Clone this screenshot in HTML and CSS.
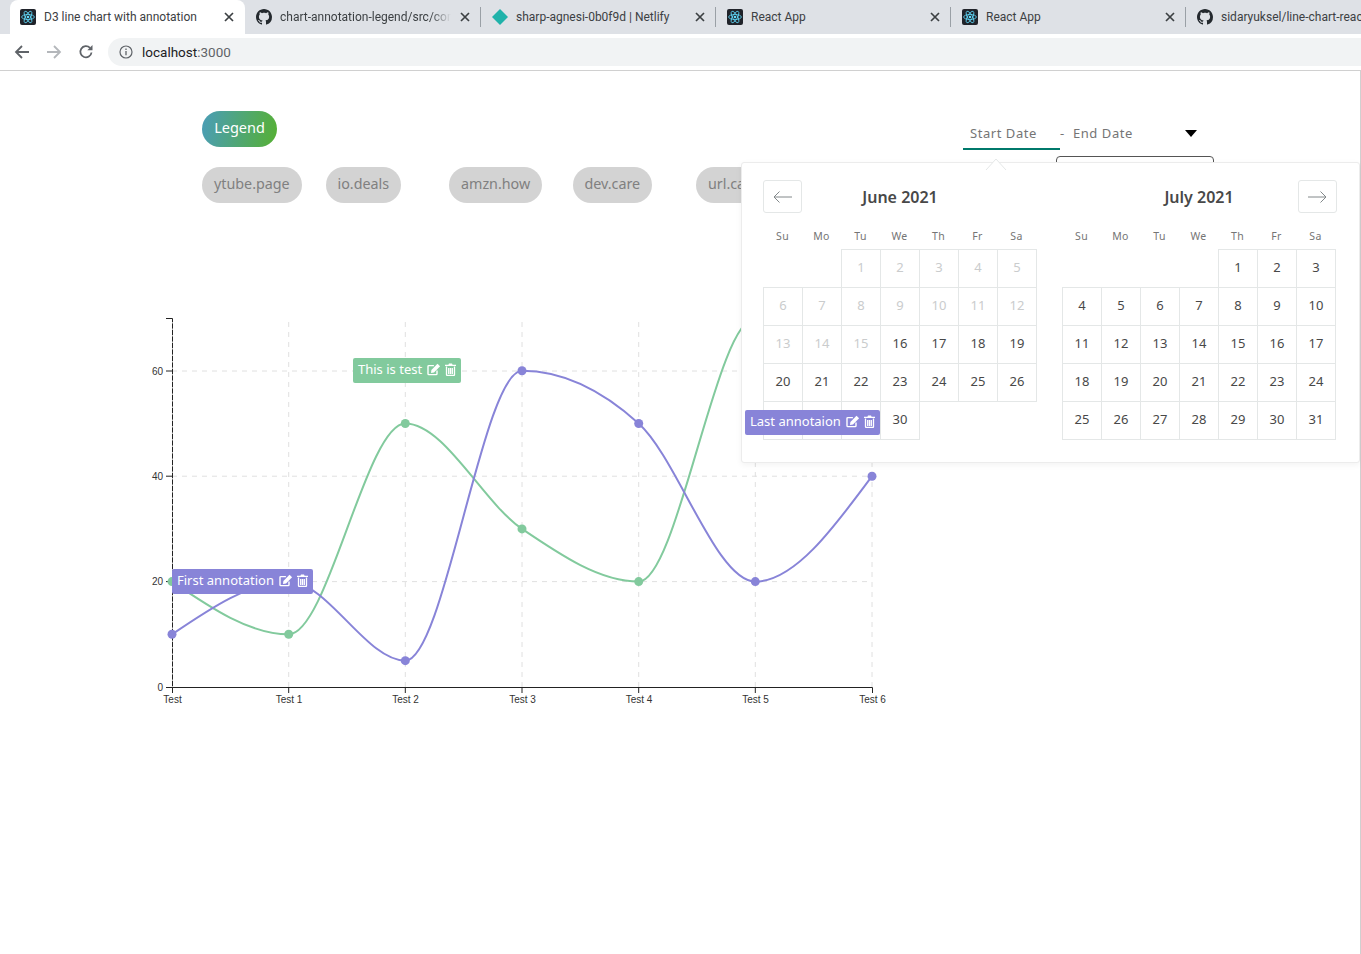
FILE: index.html
```html
<!DOCTYPE html>
<html lang="en">
<head>
    <meta charset="UTF-8">
    <meta name="viewport" content="width=device-width, initial-scale=1.0">
    <title>D3 line chart with annotation</title>
    <link rel="stylesheet" href="styles.css">
</head>
<body>
    <!-- shared icons -->
    <svg class="defs" width="0" height="0">
        <symbol id="react" viewBox="0 0 16 16">
            <rect width="16" height="16" rx="2" fill="#20232a"/>
            <g fill="none" stroke="#61dafb" stroke-width="0.8">
                <ellipse cx="8" cy="8" rx="6.4" ry="2.5"/>
                <ellipse cx="8" cy="8" rx="6.4" ry="2.5" transform="rotate(60 8 8)"/>
                <ellipse cx="8" cy="8" rx="6.4" ry="2.5" transform="rotate(120 8 8)"/>
            </g>
            <circle cx="8" cy="8" r="1.3" fill="#61dafb"/>
        </symbol>
        <symbol id="github" viewBox="0 0 16 16">
            <path fill="#24292e" d="M8 0C3.58 0 0 3.58 0 8c0 3.54 2.29 6.53 5.47 7.59.4.07.55-.17.55-.38 0-.19-.01-.82-.01-1.49-2.01.37-2.53-.49-2.69-.94-.09-.23-.48-.94-.82-1.13-.28-.15-.68-.52-.01-.53.63-.01 1.08.58 1.23.82.72 1.21 1.87.87 2.33.66.07-.52.28-.87.51-1.07-1.78-.2-3.64-.89-3.64-3.95 0-.87.31-1.59.82-2.15-.08-.2-.36-1.02.08-2.12 0 0 .67-.21 2.2.82.64-.18 1.32-.27 2-.27.68 0 1.36.09 2 .27 1.53-1.04 2.2-.82 2.2-.82.44 1.1.16 1.92.08 2.12.51.56.82 1.27.82 2.15 0 3.07-1.87 3.75-3.65 3.95.29.25.54.73.54 1.48 0 1.07-.01 1.93-.01 2.2 0 .21.15.46.55.38A8.013 8.013 0 0016 8c0-4.42-3.58-8-8-8z"/>
        </symbol>
        <symbol id="netlify" viewBox="0 0 16 16">
            <path fill="#20b2aa" d="M8 0l8 8-8 8-8-8z"/>
        </symbol>
        <symbol id="close" viewBox="0 0 10 10">
            <path d="M1 1l8 8M9 1l-8 8" fill="none" stroke="#3c4043" stroke-width="1.7"/>
        </symbol>
        <symbol id="edit" viewBox="0 0 14 13">
            <path d="M10 7.6v3.1a.9.9 0 0 1-.9.9H1.9a.9.9 0 0 1-.9-.9V3.5a.9.9 0 0 1 .9-.9h5" fill="none" stroke="#fff" stroke-width="1.4"/>
            <path d="M4.4 7l6.1-6.2 2.6 2.5-6.1 6.1-3 .5z" fill="#fff"/>
        </symbol>
        <symbol id="trash" viewBox="0 0 11 13">
            <path d="M0 1.8h3.4L4 .6h3l.6 1.2H11v1.3H0z" fill="#fff"/>
            <path d="M1.5 3.6v8a.9.9 0 0 0 .9.9h6.2a.9.9 0 0 0 .9-.9v-8M3.7 5v6M5.5 5v6M7.3 5v6" fill="none" stroke="#fff" stroke-width="1.3"/>
        </symbol>
    </svg>

    <div class="tabs">
        <div class="tab active">
            <svg class="favicon"><use href="#react"/></svg>
            <span class="tab-title">D3 line chart with annotation</span>
            <svg class="tab-close"><use href="#close"/></svg>
        </div>
        <div class="tab">
            <svg class="favicon"><use href="#github"/></svg>
            <span class="tab-title fade">chart-annotation-legend/src/components/Chart.js</span>
            <svg class="tab-close"><use href="#close"/></svg>
        </div>
        <div class="tab">
            <svg class="favicon"><use href="#netlify"/></svg>
            <span class="tab-title">sharp-agnesi-0b0f9d | Netlify</span>
            <svg class="tab-close"><use href="#close"/></svg>
        </div>
        <div class="tab">
            <svg class="favicon"><use href="#react"/></svg>
            <span class="tab-title">React App</span>
            <svg class="tab-close"><use href="#close"/></svg>
        </div>
        <div class="tab">
            <svg class="favicon"><use href="#react"/></svg>
            <span class="tab-title">React App</span>
            <svg class="tab-close"><use href="#close"/></svg>
        </div>
        <div class="tab">
            <svg class="favicon"><use href="#github"/></svg>
            <span class="tab-title">sidaryuksel/line-chart-react</span>
            <svg class="tab-close"><use href="#close"/></svg>
        </div>
    </div>

    <div class="toolbar">
        <svg class="nav-icon" viewBox="0 0 16 16"><path d="M15 8H2M8 2L2 8l6 6" fill="none" stroke="#5f6368" stroke-width="1.8"/></svg>
        <svg class="nav-icon" viewBox="0 0 16 16"><path d="M1 8h13M8 2l6 6-6 6" fill="none" stroke="#b4b7bb" stroke-width="1.8"/></svg>
        <svg class="nav-icon" viewBox="0 0 16 16"><path d="M13.5 8.5A5.6 5.6 0 1 1 12 3.9" fill="none" stroke="#5f6368" stroke-width="1.8"/><path d="M14.5 1v5.2H9.3z" fill="#5f6368"/></svg>
        <div class="url-bar">
            <svg class="info-icon" viewBox="0 0 14 14">
                <circle cx="7" cy="7" r="6" fill="none" stroke="#5f6368" stroke-width="1.2"/>
                <path d="M7 6v4.2M7 3.6v1.3" stroke="#5f6368" stroke-width="1.3"/>
            </svg>
            <span class="url">localhost<span class="url-port">:3000</span></span>
        </div>
    </div>

    <main class="page">
        <div class="top-row">
            <div class="legend-title">Legend</div>
            <div class="date-range">
                <span class="date-input start">Start Date</span>
                <span class="date-dash">-</span>
                <span class="date-input end">End Date</span>
                <span class="caret"></span>
            </div>
            <div class="select-box"></div>
        </div>

        <div class="chips">
            <div class="chip">ytube.page</div>
            <div class="chip">io.deals</div>
            <div class="chip">amzn.how</div>
            <div class="chip">dev.care</div>
            <div class="chip">url.care</div>
        </div>

        <div class="chart-wrap">
            <svg class="chart" width="770" height="400" viewBox="130 310 770 400">
                <g class="grid">
                    <path d="M172 371H872M172 476.2H872M172 581.6H872"/>
                    <path d="M288.7 322V687M405.3 322V687M522 322V687M638.7 322V687M755.3 322V687M872 322V687"/>
                </g>
                <g class="axis">
                    <path d="M166 318.5H172.5V687.5H872.5V693M172.5 687.5V693M288.7 687.5V693M405.3 687.5V693M522 687.5V693M638.7 687.5V693M755.3 687.5V693M166 687.5H172.5M166 371H172.5M166 476.2H172.5M166 581.6H172.5"/>
                </g>
                <path class="axis-dash" d="M172.5 322V687"/>
                <g class="tick-labels">
                    <text x="163" y="374.5" text-anchor="end">60</text>
                    <text x="163" y="480" text-anchor="end">40</text>
                    <text x="163" y="585" text-anchor="end">20</text>
                    <text x="163" y="691" text-anchor="end">0</text>
                    <text x="172.5" y="703" text-anchor="middle">Test</text>
                    <text x="289" y="703" text-anchor="middle">Test 1</text>
                    <text x="405.5" y="703" text-anchor="middle">Test 2</text>
                    <text x="522.5" y="703" text-anchor="middle">Test 3</text>
                    <text x="639" y="703" text-anchor="middle">Test 4</text>
                    <text x="755.5" y="703" text-anchor="middle">Test 5</text>
                    <text x="872.5" y="703" text-anchor="middle">Test 6</text>
                </g>
                <path class="line green" d="M172,581.6 C210.9,607.95 249.8,634.3 288.7,634.3 C327.6,634.3 366.4,423.5 405.3,423.5 C444.2,423.5 483.1,502.55 522,528.9 C560.9,555.25 599.8,581.6 638.7,581.6 C677.6,581.6 716.4,318.1 755.3,318.1 L872,340"/>
                <path class="line purple" d="M172,634.3 C210.9,607.95 249.8,581.6 288.7,581.6 C327.6,581.6 366.4,660.65 405.3,660.65 C444.2,660.65 483.1,370.8 522,370.8 C560.9,370.8 599.8,388.35 638.7,423.5 C677.6,458.65 716.4,581.6 755.3,581.6 C794.2,581.6 833.1,528.9 872,476.2"/>
                <g class="dots green-dots">
                    <circle cx="172" cy="581.6" r="4.5"/>
                    <circle cx="288.7" cy="634.3" r="4.5"/>
                    <circle cx="405.3" cy="423.5" r="4.5"/>
                    <circle cx="522" cy="528.9" r="4.5"/>
                    <circle cx="638.7" cy="581.6" r="4.5"/>
                </g>
                <g class="dots purple-dots">
                    <circle cx="172" cy="634.3" r="4.5"/>
                    <circle cx="405.3" cy="660.65" r="4.5"/>
                    <circle cx="522" cy="370.8" r="4.5"/>
                    <circle cx="638.7" cy="423.5" r="4.5"/>
                    <circle cx="755.3" cy="581.6" r="4.5"/>
                    <circle cx="872" cy="476.2" r="4.5"/>
                </g>
            </svg>

            <div class="note note-purple note-first">
                <span>First annotation</span>
                <svg class="note-edit"><use href="#edit"/></svg>
                <svg class="note-trash"><use href="#trash"/></svg>
            </div>
            <div class="note note-green note-test">
                <span>This is test</span>
                <svg class="note-edit"><use href="#edit"/></svg>
                <svg class="note-trash"><use href="#trash"/></svg>
            </div>
            <div class="note note-purple note-last">
                <span>Last annotaion</span>
                <svg class="note-edit"><use href="#edit"/></svg>
                <svg class="note-trash"><use href="#trash"/></svg>
            </div>
        </div>

        <div class="picker">
            <svg class="picker-arrow" width="22" height="12" viewBox="0 0 22 12"><path d="M1 12L11 1l10 11" fill="#fff" stroke="#e4e7e7"/></svg>
            <div class="nav-btn nav-prev">
                <svg width="19" height="12" viewBox="0 0 19 12"><path d="M19 6H1M6.5 .5L1 6l5.5 5.5" fill="none" stroke="#82888a"/></svg>
            </div>
            <div class="nav-btn nav-next">
                <svg width="19" height="12" viewBox="0 0 19 12"><path d="M0 6h18M12.5 .5L18 6l-5.5 5.5" fill="none" stroke="#82888a"/></svg>
            </div>

            <div class="month">
                <div class="month-title">June 2021</div>
                <div class="weekdays"><span>Su</span><span>Mo</span><span>Tu</span><span>We</span><span>Th</span><span>Fr</span><span>Sa</span></div>
                <table class="days">
                    <tr><td class="empty"></td><td class="empty"></td><td class="off">1</td><td class="off">2</td><td class="off">3</td><td class="off">4</td><td class="off">5</td></tr>
                    <tr><td class="off">6</td><td class="off">7</td><td class="off">8</td><td class="off">9</td><td class="off">10</td><td class="off">11</td><td class="off">12</td></tr>
                    <tr><td class="off">13</td><td class="off">14</td><td class="off">15</td><td>16</td><td>17</td><td>18</td><td>19</td></tr>
                    <tr><td>20</td><td>21</td><td>22</td><td>23</td><td>24</td><td>25</td><td>26</td></tr>
                    <tr><td>27</td><td>28</td><td>29</td><td>30</td><td class="empty"></td><td class="empty"></td><td class="empty"></td></tr>
                </table>
            </div>

            <div class="month">
                <div class="month-title">July 2021</div>
                <div class="weekdays"><span>Su</span><span>Mo</span><span>Tu</span><span>We</span><span>Th</span><span>Fr</span><span>Sa</span></div>
                <table class="days">
                    <tr><td class="empty"></td><td class="empty"></td><td class="empty"></td><td class="empty"></td><td>1</td><td>2</td><td>3</td></tr>
                    <tr><td>4</td><td>5</td><td>6</td><td>7</td><td>8</td><td>9</td><td>10</td></tr>
                    <tr><td>11</td><td>12</td><td>13</td><td>14</td><td>15</td><td>16</td><td>17</td></tr>
                    <tr><td>18</td><td>19</td><td>20</td><td>21</td><td>22</td><td>23</td><td>24</td></tr>
                    <tr><td>25</td><td>26</td><td>27</td><td>28</td><td>29</td><td>30</td><td>31</td></tr>
                </table>
            </div>
        </div>
    </main>
</body>
</html>
```

FILE: styles.css
```css
* {
    box-sizing: border-box;
}
html, body {
    margin: 0;
    padding: 0;
    height: 954px;
    overflow: hidden;
    background-color: #fff;
}
body {
    font-family: "Noto Sans", sans-serif;
    color: #484848;
}
.defs {
    display: block;
    height: 0;
}

/* browser chrome */
.tabs {
    display: flex;
    height: 34px;
    padding-left: 10px;
    align-items: center;
    background-color: #dee1e6;
    overflow: hidden;
}
.tab {
    flex: 0 0 235px;
    min-width: 0;
    display: flex;
    align-items: center;
    height: 20px;
    padding: 0 10px 0 11px;
    border-right: 1px solid #9aa0a6;
    font-family: Roboto, sans-serif;
    font-size: 12px;
    color: #3c4043;
}
.tab:nth-child(2) {
    flex-basis: 236px;
}
.tab.active {
    height: 34px;
    padding: 0 11px 0 10px;
    border-right: none;
    border-radius: 8px 8px 0 0;
    background-color: #fff;
}
.favicon {
    flex: none;
    width: 16px;
    height: 16px;
    margin-right: 8px;
}
.tab-title {
    flex: 1;
    min-width: 0;
    white-space: nowrap;
    overflow: hidden;
}
.tab-title.fade {
    -webkit-mask-image: linear-gradient(to right, #000 88%, transparent 100%);
    mask-image: linear-gradient(to right, #000 88%, transparent 100%);
}
.tab-close {
    flex: none;
    width: 10px;
    height: 10px;
    margin-left: 9px;
}
.toolbar {
    display: flex;
    align-items: center;
    height: 36px;
    padding-left: 14px;
    background-color: #fff;
}
.nav-icon {
    flex: none;
    width: 16px;
    height: 16px;
    margin-right: 16px;
}
.url-bar {
    flex: 1;
    display: flex;
    align-items: center;
    height: 28px;
    margin-left: -2px;
    padding-left: 11px;
    border-radius: 14px 0 0 14px;
    background-color: #f1f3f4;
}
.info-icon {
    width: 14px;
    height: 14px;
    margin-right: 9px;
}
.url {
    font-family: Roboto, sans-serif;
    font-size: 13.5px;
    line-height: 28px;
    height: 28px;
    color: #202124;
}
.url-port {
    color: #5f6368;
}

/* page */
.page {
    position: relative;
    height: 884px;
    padding-top: 40px;
    border-top: 1px solid #d0d0d0;
    border-right: 1px solid #d0d0d0;
    background-color: #fff;
}
.top-row {
    display: flex;
    height: 36px;
    padding-left: 202px;
}
.legend-title {
    width: 75px;
    height: 36px;
    line-height: 33px;
    text-align: center;
    border-radius: 18px;
    font-size: 14.5px;
    color: #fff;
    background: linear-gradient(100deg, #4a9db8 0%, #56b033 100%);
}
.date-range {
    display: flex;
    align-self: flex-start;
    height: 32px;
    margin: 7px 0 0 686px;
    font-size: 13px;
    letter-spacing: 0.55px;
    color: #757575;
}
.date-input {
    width: 97px;
    height: 32px;
    line-height: 30px;
    padding-left: 7px;
}
.date-input.start {
    border-bottom: 2px solid #00796b;
}
.date-input.end {
    padding-left: 0;
}
.date-dash {
    width: 13px;
    line-height: 30px;
}
.caret {
    width: 0;
    height: 0;
    margin: 12px 0 0 15px;
    border-left: 6px solid transparent;
    border-right: 6px solid transparent;
    border-top: 7px solid #000;
}
.select-box {
    position: absolute;
    left: 1056px;
    top: 85px;
    width: 158px;
    height: 20px;
    border: 1px solid #555;
    border-radius: 4px;
}
.chips {
    display: grid;
    grid-template-columns: repeat(5, 123.5px);
    margin-top: 20px;
    padding-left: 202px;
}
.chip {
    justify-self: start;
    height: 36px;
    line-height: 33px;
    padding: 0 12px;
    border-radius: 18px;
    font-size: 14.3px;
    color: #808080;
    background-color: #d3d3d3;
}

/* chart */
.chart-wrap {
    margin: 107px 0 0 130px;
}
.chart {
    display: block;
}
.grid path {
    fill: none;
    stroke: #e0e0e0;
    stroke-dasharray: 5 5;
}
.axis path {
    fill: none;
    stroke: #222;
}
.axis-dash {
    stroke: #bbb;
    stroke-dasharray: 1.5 5;
}
.tick-labels text {
    font-family: "Liberation Sans", Arial, sans-serif;
    font-size: 10px;
    fill: #333;
}
.line {
    fill: none;
    stroke-width: 2;
}
.green {
    stroke: #82ca9d;
}
.purple {
    stroke: #8884d8;
}
.green-dots {
    fill: #82ca9d;
}
.purple-dots {
    fill: #8884d8;
}
.note {
    position: absolute;
    z-index: 2;
    display: flex;
    align-items: center;
    height: 25px;
    padding: 0 5px 3px;
    border-radius: 2px;
    font-size: 13px;
    color: #fff;
}
.note-purple {
    background-color: #8884d8;
}
.note-green {
    background-color: #82ca9d;
}
.note-first {
    left: 172px;
    top: 498px;
}
.note-test {
    left: 353px;
    top: 287px;
}
.note-last {
    left: 745px;
    top: 339px;
}
.note-edit {
    width: 14px;
    height: 13px;
    margin-left: 5px;
}
.note-trash {
    width: 11px;
    height: 13px;
    margin-left: 4px;
}

/* date picker popup */
.picker {
    position: absolute;
    z-index: 1;
    left: 741px;
    top: 91px;
    width: 619px;
    height: 301px;
    display: flex;
    gap: 25px;
    padding: 22px 0 0 21px;
    border: 1px solid #ececec;
    border-radius: 3px;
    background-color: #fff;
    box-shadow: 0 2px 6px rgba(0, 0, 0, 0.05);
}
.picker-arrow {
    position: absolute;
    left: 243px;
    top: -5px;
}
.nav-btn {
    position: absolute;
    top: 17px;
    display: flex;
    align-items: center;
    justify-content: center;
    width: 39px;
    height: 33px;
    border: 1px solid #e4e7e7;
    border-radius: 3px;
    background-color: #fff;
}
.nav-prev {
    left: 21px;
}
.nav-next {
    left: 556px;
}
.month {
    width: 274px;
}
.month-title {
    height: 24px;
    line-height: 24px;
    text-align: center;
    font-size: 16px;
    font-weight: 600;
    color: #484848;
}
.weekdays {
    display: grid;
    grid-template-columns: repeat(7, 39px);
    height: 20px;
    margin-top: 17px;
    line-height: 20px;
    text-align: center;
    font-size: 10.5px;
    letter-spacing: 0.3px;
    color: #757575;
}
.days {
    width: 274px;
    margin-top: 3px;
    table-layout: fixed;
    border-collapse: collapse;
}
.days td {
    height: 38px;
    padding: 0 0 3px;
    text-align: center;
    font-size: 13px;
    color: #484848;
    border: 1px solid #e4e7e7;
}
.days td.off {
    color: #cacccd;
}
.days td.empty {
    border: none;
}
```
